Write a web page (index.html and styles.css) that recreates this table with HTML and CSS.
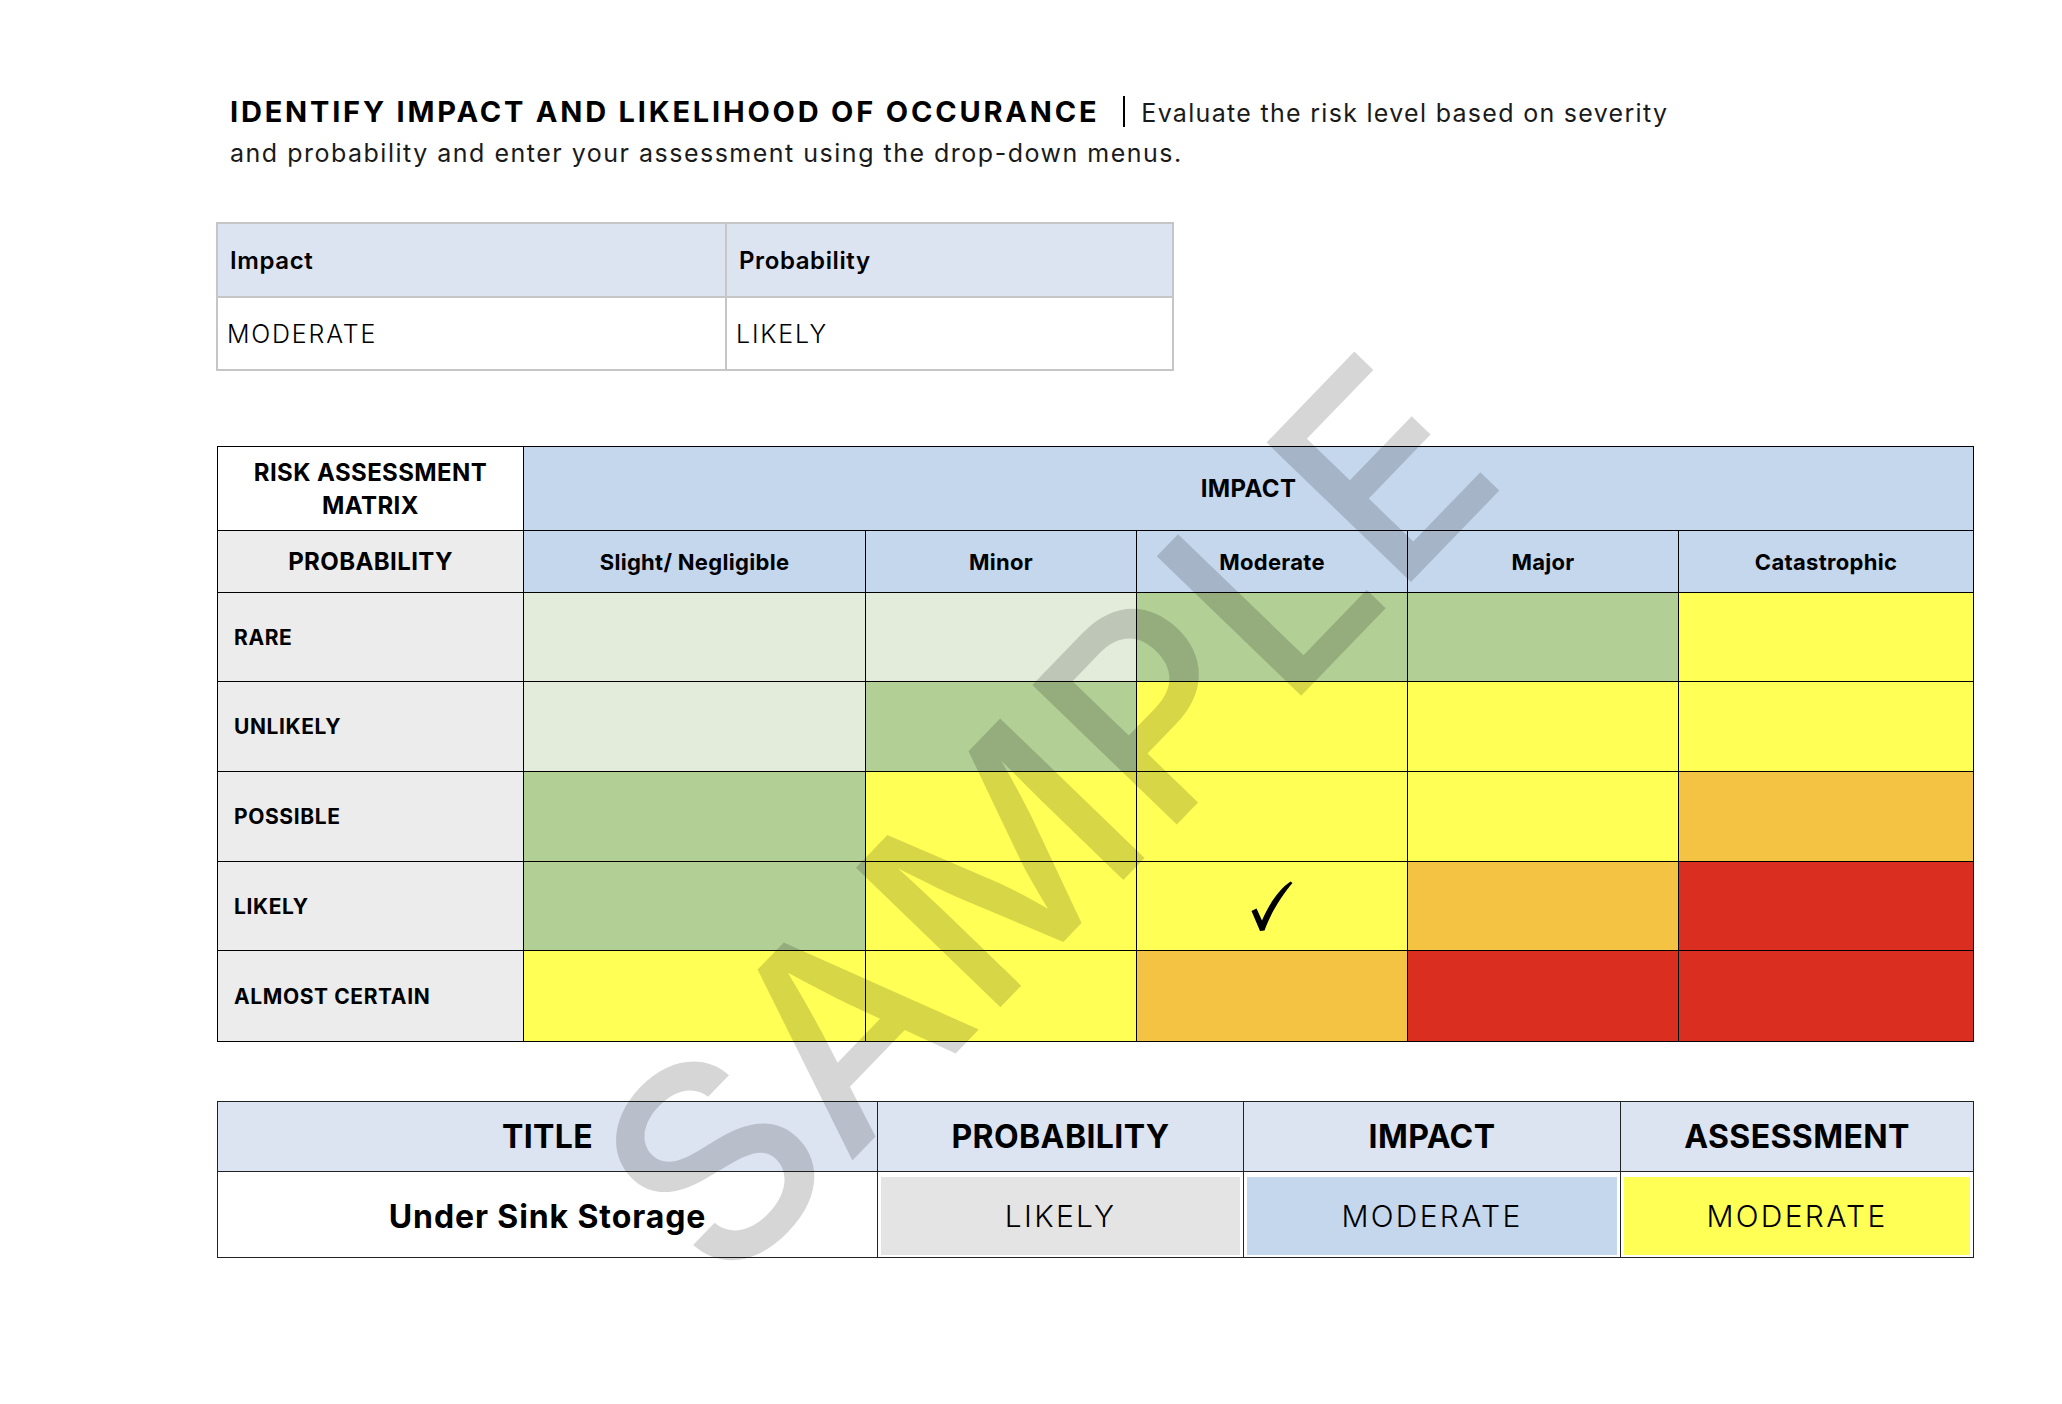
FILE: index.html
```html
<!DOCTYPE html>
<html lang="en">
<head>
<meta charset="utf-8">
<title>Risk Assessment Matrix</title>
<link rel="stylesheet" href="styles.css">
</head>
<body>
<div class="page">
  <p class="intro"><span class="intro-title">IDENTIFY IMPACT AND LIKELIHOOD OF OCCURANCE</span><span class="sep"></span><span>Evaluate the risk level based on severity</span><br><span class="intro-line2">and probability and enter your assessment using the drop-down menus.</span></p>

  <table class="select-table">
    <colgroup><col class="sc1"><col class="sc2"></colgroup>
    <tr><th>Impact</th><th>Probability</th></tr>
    <tr><td>MODERATE</td><td>LIKELY</td></tr>
  </table>

  <table class="matrix">
    <colgroup><col class="mc0"><col class="mc1"><col class="mc2"><col class="mc3"><col class="mc4"><col class="mc5"></colgroup>
    <tr class="r-top"><th class="corner">RISK ASSESSMENT<br>MATRIX</th><th class="impact-head" colspan="5">IMPACT</th></tr>
    <tr class="r-head"><th class="prob-head">PROBABILITY</th><th class="col-head">Slight/ Negligible</th><th class="col-head">Minor</th><th class="col-head">Moderate</th><th class="col-head">Major</th><th class="col-head">Catastrophic</th></tr>
    <tr class="r1"><th class="row-head">RARE</th><td class="lg"></td><td class="lg"></td><td class="g"></td><td class="g"></td><td class="y"></td></tr>
    <tr class="r2"><th class="row-head">UNLIKELY</th><td class="lg"></td><td class="g"></td><td class="y"></td><td class="y"></td><td class="y"></td></tr>
    <tr class="r3"><th class="row-head">POSSIBLE</th><td class="g"></td><td class="y"></td><td class="y"></td><td class="y"></td><td class="o"></td></tr>
    <tr class="r4"><th class="row-head">LIKELY</th><td class="g"></td><td class="y"></td><td class="y check-cell"><svg class="check" viewBox="0 0 42 50" width="42" height="50"><path d="M0.5 30 L5.5 27.5 L11 39.5 C17 25 27 9 39.5 0.5 L41.5 2 C32 13 20 31 13.5 49.5 L9 50 Z"/></svg></td><td class="o"></td><td class="r"></td></tr>
    <tr class="r5"><th class="row-head">ALMOST CERTAIN</th><td class="y"></td><td class="y"></td><td class="o"></td><td class="r"></td><td class="r"></td></tr>
  </table>

  <table class="summary">
    <colgroup><col class="uc1"><col class="uc2"><col class="uc3"><col class="uc4"></colgroup>
    <tr class="u-head"><th>TITLE</th><th>PROBABILITY</th><th>IMPACT</th><th>ASSESSMENT</th></tr>
    <tr class="u-row"><td class="title-cell">Under Sink Storage</td><td><div class="fill fill-gray">LIKELY</div></td><td><div class="fill fill-blue">MODERATE</div></td><td><div class="fill fill-yellow">MODERATE</div></td></tr>
  </table>

  <div class="watermark">SAMPLE</div>
</div>
</body>
</html>
```

FILE: styles.css
```css
* { box-sizing: border-box; }
html, body { margin: 0; padding: 0; background: #fff; }
body { font-family: Inter, "Open Sans", "Liberation Sans", sans-serif; color: #000; }

.page { position: relative; width: 2062px; height: 1404px; padding: 92px 0 0 216px; overflow: hidden; }

.intro { margin: 0 0 49px 14px; font-size: 25px; line-height: 40px; font-weight: 400; letter-spacing: 1.3px; color: #1a1a1a; }
.intro-title { font-weight: 700; font-size: 29px; letter-spacing: 2.8px; color: #000; }
.intro-line2 { letter-spacing: 1.5px; }
.sep { display: inline-block; width: 2px; height: 31px; background: #000; margin: 0 16px 0 24px; vertical-align: -5px; }

.select-table { border-collapse: collapse; table-layout: fixed; width: 956px; margin-bottom: 75px; }
.sc1 { width: 509px; }
.sc2 { width: 447px; }
.select-table th, .select-table td { border: 2px solid #c6c6c6; text-align: left; }
.select-table th { height: 74px; background: #dce3f1; font-weight: 600; font-size: 24px; letter-spacing: 0.6px; padding: 0 0 0 12px; }
.select-table td { height: 73px; font-weight: 300; font-size: 25px; letter-spacing: 1.8px; padding: 0 0 0 9px; }

.matrix { border-collapse: collapse; table-layout: fixed; width: 1756px; margin: 0 0 59px 1px; }
.mc0 { width: 306px; } .mc1 { width: 342px; } .mc2 { width: 271px; } .mc3 { width: 271px; } .mc4 { width: 271px; } .mc5 { width: 295px; }
.matrix th, .matrix td { border: 1px solid #000; padding: 0; }
.r-top { height: 84px; }
.r-head { height: 62px; }
.r1 { height: 89px; } .r2 { height: 90px; } .r3 { height: 90px; } .r4 { height: 89px; } .r5 { height: 91px; }
.corner { background: #fff; font-size: 24px; font-weight: 700; letter-spacing: 0.4px; line-height: 33px; }
.impact-head { background: #c5d7ed; font-size: 24px; font-weight: 700; letter-spacing: 0.4px; }
.prob-head { background: #ececec; font-size: 24px; font-weight: 700; letter-spacing: 0.4px; }
.col-head { background: #c5d7ed; font-size: 22px; font-weight: 700; letter-spacing: 0.3px; }
.matrix .row-head { background: #ececec; font-size: 21px; font-weight: 700; letter-spacing: 0.6px; text-align: left; padding-left: 16px; }
.lg { background: #e3ecda; }
.g { background: #b2cf95; }
.y { background: #ffff55; }
.o { background: #f4c343; }
.r { background: #da2e21; }
.check-cell { text-align: center; vertical-align: middle; }
.check { display: block; margin: 0 auto; fill: #000; }

.summary { border-collapse: collapse; table-layout: fixed; width: 1756px; margin-left: 1px; }
.uc1 { width: 660px; } .uc2 { width: 366px; } .uc3 { width: 377px; } .uc4 { width: 353px; }
.summary th, .summary td { border: 1px solid #222; padding: 0; text-align: center; }
.u-head { height: 70px; }
.u-head th { background: #dce3f1; font-size: 32px; font-weight: 700; letter-spacing: 0.4px; }
.u-row { height: 86px; }
.u-row td { padding: 5px 3px 2px 3px; }
.summary .title-cell { font-size: 32px; font-weight: 700; letter-spacing: 0.9px; }
.fill { height: 78px; display: flex; align-items: center; justify-content: center; font-size: 30px; font-weight: 300; letter-spacing: 2.3px; }
.fill-gray { background: #e4e4e4; }
.fill-blue { background: #c5d7ed; }
.fill-yellow { background: #ffff55; }

.watermark { position: absolute; left: 1046px; top: 816px; transform: translate(-50%, -50%) rotate(-46deg); font-size: 276px; line-height: 1; font-weight: 500; letter-spacing: 2px; color: rgba(0, 0, 0, 0.16); white-space: nowrap; pointer-events: none; }
```
